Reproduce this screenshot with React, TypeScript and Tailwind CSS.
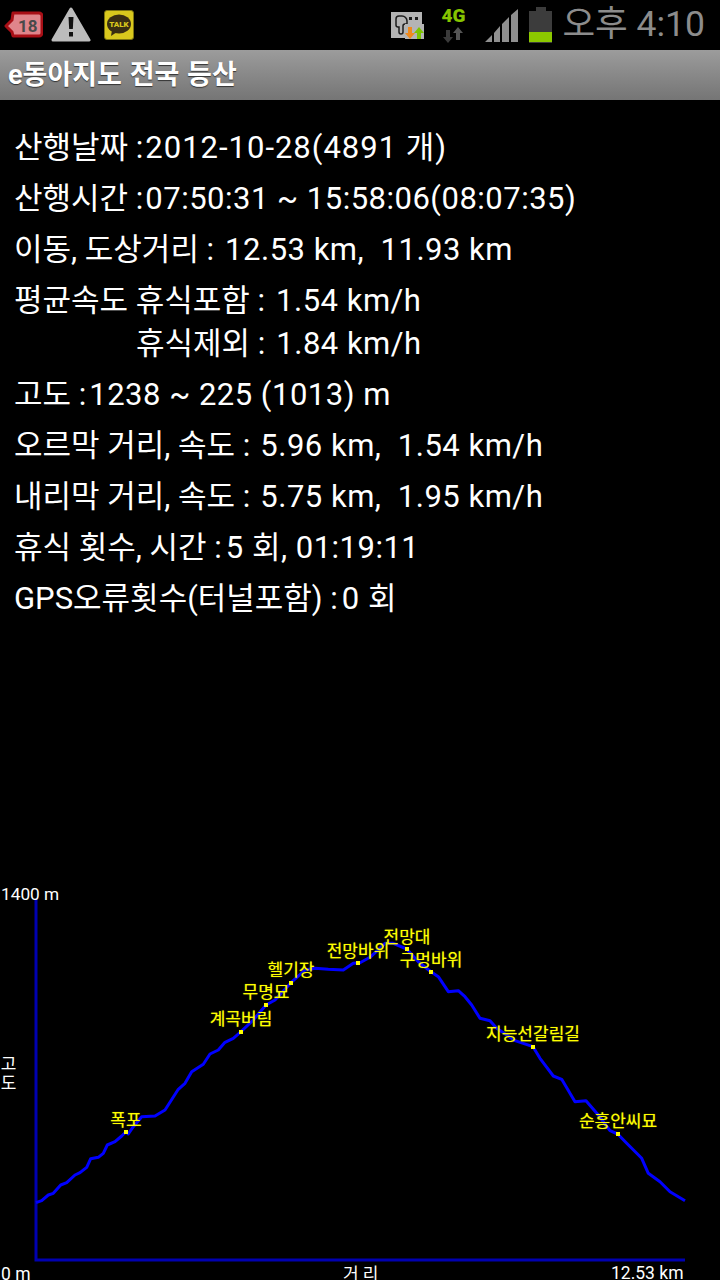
const SANS = "font-['Roboto','Noto_Sans_CJK_KR',sans-serif]";

const ridge: [number, number][] = [
  [108,968],[125,962],[145,945],[160,940],[182,915],[200,908],[225,885],[240,878],[260,862],[272,836],[295,832],[310,820],[322,795],[345,785],[365,768],[378,755],[385,762],[400,740],[425,710],[465,708],[495,690],[535,628],[555,610],[575,575],[610,553],[630,522],[655,510],[675,487],[700,475],[723,455],[760,420],[798,375],[825,360],[873,308],[915,270],[945,265],[985,268],[1030,270],[1060,250],[1080,248],
  [1110,232],[1155,190],[1180,190],[1220,207],[1255,245],[1293,275],[1315,290],[1345,335],[1375,332],[1395,350],[1415,375],[1440,415],[1470,422],[1490,445],[1545,482],[1599,500],[1620,535],[1660,588],[1685,598],[1725,665],[1758,662],[1795,705],[1830,752],[1853,762],[1880,790],[1925,835],[1945,880],[1980,905],[2010,935],[2055,962],
];
const points = ridge.map(([x, y]) => `${(x / 3).toFixed(1)},${(y / 3).toFixed(1)}`).join(" ");

const marks: { name: string; x: number; y: number; lx: number; ly: number }[] = [
  { name: "폭포", x: 126, y: 252, lx: 126, ly: 240 },
  { name: "계곡버림", x: 241, y: 152, lx: 241, ly: 139 },
  { name: "무명묘", x: 266, y: 125, lx: 266, ly: 112 },
  { name: "헬기장", x: 291, y: 103, lx: 291, ly: 90 },
  { name: "전망바위", x: 358, y: 83, lx: 358, ly: 71 },
  { name: "전망대", x: 407, y: 69, lx: 407, ly: 57 },
  { name: "구멍바위", x: 431, y: 92, lx: 431, ly: 80 },
  { name: "지능선갈림길", x: 533, y: 167, lx: 533, ly: 154 },
  { name: "순흥안씨묘", x: 618, y: 254, lx: 618, ly: 241 },
];

function Row({ label, value, gap = "ml-[2px] tracking-[0.5px]" }: { label: string; value: string; gap?: string }) {
  return (
    <p className="whitespace-pre">
      {label}
      <span className={gap}>{value}</span>
    </p>
  );
}

function Badge() {
  return (
    <svg width="40" height="28" viewBox="0 0 40 28" className="mt-[11px]">
      <path d="M10 2h26a3 3 0 0 1 3 3v17a3 3 0 0 1-3 3H10l-1-4-6-6 6-6z" fill="#e0858b" stroke="#a80f16" strokeWidth="3" strokeLinejoin="round" />
      <text x="15" y="21" fontFamily="Roboto" fontWeight="700" fontSize="17" fill="#4a4a4a">18</text>
    </svg>
  );
}

function Warning() {
  return (
    <svg width="40" height="37" viewBox="0 0 40 37" className="ml-[8px] mt-[6px]">
      <path d="M20 3 38 34H2z" fill="#bcbcbc" stroke="#bcbcbc" strokeWidth="3" strokeLinejoin="round" />
      <path d="M17.500 11h5l-.7 12h-3.600z" fill="#111" />
      <rect x="18" y="26" width="4" height="4.500" fill="#111" />
    </svg>
  );
}

function Talk() {
  return (
    <svg width="30" height="30" viewBox="0 0 30 30" className="ml-[13px] mt-[10px]">
      <rect x="0.5" y="0.5" width="29" height="29" rx="2.500" fill="#d9c81d" stroke="#7d7410" />
      <ellipse cx="15" cy="14" rx="12" ry="9.500" fill="#3a2e12" />
      <path d="M8 20l-1 6 6-4z" fill="#3a2e12" />
      <text x="15" y="17" textAnchor="middle" fontFamily="Roboto" fontWeight="900" fontSize="8" fill="#d9c81d">TALK</text>
    </svg>
  );
}

function Sd() {
  return (
    <svg width="33" height="27" viewBox="0 0 33 27" className="mt-[12px]">
      <rect x="0" y="0" width="31" height="26" fill="#b4b4b4" />
      <path d="M5 7a3 3 0 0 1 3-3h3a5 5 0 0 1 5 5v3h-2a2 2 0 0 0-2 2v6a2 2 0 0 1-4 0v-5h-1a2 2 0 0 1-2-2z" fill="none" stroke="#1c1c1c" strokeWidth="1.500" />
      <rect x="18" y="5" width="3" height="3" fill="#1c1c1c" />
      <rect x="24" y="5" width="3" height="3" fill="#1c1c1c" />
      <rect x="14" y="12" width="19" height="15" fill="#b4b4b4" />
      <path d="M17 15h4v6h3l-5 6-5-6h3z" fill="#f08a1c" />
      <path d="M28 15l5 6h-3v6h-4v-6h-3z" fill="#7cc400" />
    </svg>
  );
}

function FourG() {
  return (
    <div className="ml-[17px] mt-[6px] flex w-[24px] flex-col items-center">
      <span className="font-['Roboto',sans-serif] text-[19px] leading-[20px] font-black text-[#86c400]">4G</span>
      <svg width="22" height="16" viewBox="0 0 22 16" className="mt-[1px]">
        <path d="M4 3h4v7h3l-5 6-5-6h3z" fill="#3a3a3a" />
        <path d="M16 0l5 6h-3v7h-4V6h-3z" fill="#555" />
      </svg>
    </div>
  );
}

function Signal() {
  return (
    <svg width="34" height="33" viewBox="0 0 34 33" className="ml-[20px] mt-[9px]">
      <path d="M0 33 7 26V33zM9 33V24L15 17V33zM17 33V15L24 8V33zM26 33V6L33 0V33z" fill="#8f8f8f" />
    </svg>
  );
}

function Battery() {
  return (
    <svg width="24" height="36" viewBox="0 0 24 36" className="ml-[10px] mt-[7px]">
      <rect x="7" y="0" width="10" height="5" fill="#3c3c3c" />
      <rect x="0" y="4" width="23" height="32" fill="#3c3c3c" />
      <rect x="0" y="25" width="23" height="10" fill="#8cc800" />
    </svg>
  );
}

export default function App() {
  return (
    <div className={`${SANS} flex h-[1280px] w-[720px] flex-col overflow-hidden bg-black text-white`}>
      <header className="flex h-[50px] shrink-0 items-start pl-[3px] pr-[15px]">
        <Badge />
        <Warning />
        <Talk />
        <div className="ml-auto flex items-start">
          <Sd />
          <FourG />
          <Signal />
          <Battery />
          <span className="ml-[9px] mt-[3px] text-[35.5px] leading-[42px] text-[#8c8c8c]">오후 4:10</span>
        </div>
      </header>

      <div className="flex h-[50px] shrink-0 items-center whitespace-pre bg-gradient-to-b from-[#9c9c9c] to-[#757575] pl-[8px] text-[27px] font-bold [word-spacing:1px] [text-shadow:0_1px_1px_#333]">
        e동아지도 전국 등산
      </div>

      <main className="flex flex-col gap-[8px] pl-[14px] pt-[26px] text-[31px] leading-[43px]">
        <Row label="산행날짜 :" value="2012-10-28(4891 개)" gap="ml-[2px] tracking-[1px]" />
        <Row label="산행시간 :" value="07:50:31 ~ 15:58:06(08:07:35)" />
        <Row label="이동, 도상거리 :" value="12.53 km,  11.93 km" gap="ml-[11px] tracking-[0.5px]" />
        <div className="whitespace-pre">
          <p>평균속도 휴식포함 :<span className="ml-[11px] tracking-[0.5px]">1.54 km/h</span></p>
          <p className="pl-[122px]">휴식제외 :<span className="ml-[11px] tracking-[0.5px]">1.84 km/h</span></p>
        </div>
        <Row label="고도 :" value="1238 ~ 225 (1013) m" gap="ml-[3px] tracking-[0.5px]" />
        <Row label="오르막 거리, 속도 :" value="5.96 km,  1.54 km/h" gap="ml-[10px] tracking-[0.5px]" />
        <Row label="내리막 거리, 속도 :" value="5.75 km,  1.95 km/h" gap="ml-[10px] tracking-[0.5px]" />
        <Row label="휴식 횟수, 시간 :" value="5 회, 01:19:11" gap="ml-[4px] tracking-[0.5px]" />
        <Row label="GPS오류횟수(터널포함) :" value="0 회" gap="ml-[4px] tracking-[0.5px]" />
      </main>

      <section className="relative mt-auto h-[400px] w-[720px]">
        <svg width="720" height="400" viewBox="0 0 720 400" className="absolute left-0 top-0">
          <path d="M36 19V380H685" fill="none" stroke="#0000b0" strokeWidth="3" />
          <polyline points={points} fill="none" stroke="#0000ff" strokeWidth="3" strokeLinejoin="round" />
        </svg>
        <span className="absolute left-[1px] top-[3px] text-[17.25px] leading-[22px]">1400 m</span>
        <span className="absolute left-[1px] top-[383px] text-[17.5px] leading-[22px]">0 m</span>
        <span className="absolute left-0 top-[175px] w-[17px] text-center text-[17px] leading-[19px]">고<br />도</span>
        <span className="absolute left-[343px] top-[383px] text-[17px] leading-[22px]">거 리</span>
        <span className="absolute left-[611px] top-[382px] text-[17.5px] leading-[22px]">12.53 km</span>
        {marks.map((m) => (
          <div key={m.name}>
            <span className="absolute -translate-x-1/2 -translate-y-1/2 whitespace-pre text-[17px] leading-[22px] text-[#ffff00] [text-shadow:0_0_1px_#999900]" style={{ left: m.lx, top: m.ly }}>{m.name}</span>
            <span className="absolute h-[4px] w-[4px] bg-[#ffff00]" style={{ left: m.x - 2, top: m.y - 2 }} />
          </div>
        ))}
      </section>
    </div>
  );
}
